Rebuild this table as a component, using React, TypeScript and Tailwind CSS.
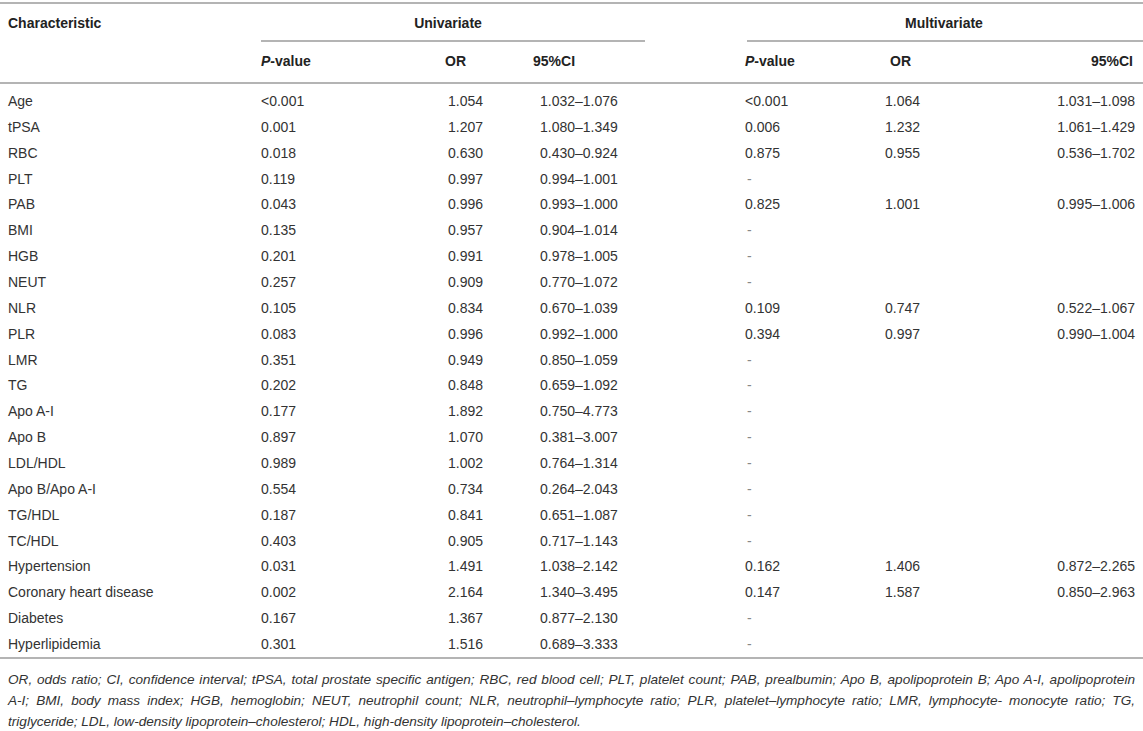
import React from "react";

type Row = [string, string, string, string, string?, string?, string?];

const rows: Row[] = [
  ["Age", "<0.001", "1.054", "1.032–1.076", "<0.001", "1.064", "1.031–1.098"],
  ["tPSA", "0.001", "1.207", "1.080–1.349", "0.006", "1.232", "1.061–1.429"],
  ["RBC", "0.018", "0.630", "0.430–0.924", "0.875", "0.955", "0.536–1.702"],
  ["PLT", "0.119", "0.997", "0.994–1.001", "-"],
  ["PAB", "0.043", "0.996", "0.993–1.000", "0.825", "1.001", "0.995–1.006"],
  ["BMI", "0.135", "0.957", "0.904–1.014", "-"],
  ["HGB", "0.201", "0.991", "0.978–1.005", "-"],
  ["NEUT", "0.257", "0.909", "0.770–1.072", "-"],
  ["NLR", "0.105", "0.834", "0.670–1.039", "0.109", "0.747", "0.522–1.067"],
  ["PLR", "0.083", "0.996", "0.992–1.000", "0.394", "0.997", "0.990–1.004"],
  ["LMR", "0.351", "0.949", "0.850–1.059", "-"],
  ["TG", "0.202", "0.848", "0.659–1.092", "-"],
  ["Apo A-I", "0.177", "1.892", "0.750–4.773", "-"],
  ["Apo B", "0.897", "1.070", "0.381–3.007", "-"],
  ["LDL/HDL", "0.989", "1.002", "0.764–1.314", "-"],
  ["Apo B/Apo A-I", "0.554", "0.734", "0.264–2.043", "-"],
  ["TG/HDL", "0.187", "0.841", "0.651–1.087", "-"],
  ["TC/HDL", "0.403", "0.905", "0.717–1.143", "-"],
  ["Hypertension", "0.031", "1.491", "1.038–2.142", "0.162", "1.406", "0.872–2.265"],
  ["Coronary heart disease", "0.002", "2.164", "1.340–3.495", "0.147", "1.587", "0.850–2.963"],
  ["Diabetes", "0.167", "1.367", "0.877–2.130", "-"],
  ["Hyperlipidemia", "0.301", "1.516", "0.689–3.333", "-"],
];

const cols = "grid grid-cols-[261px_179px_90px_215px_135px_160px_103px]";

export default function App() {
  return (
    <div
      className="w-[1143px] h-[731px] bg-white text-[#333] overflow-hidden"
      style={{ fontFamily: '"Liberation Sans", Arial, sans-serif' }}
    >
      <div className="pt-[2px]">
        <div className="h-[2px] bg-[#b4b4b4]" />
        {/* header row 1 */}
        <div className={`${cols} h-[36px] items-center text-[14px] font-bold text-[#222]`}>
          <div className="pl-[8px] pt-[2px]">Characteristic</div>
          <div className="col-span-3 flex justify-center pr-[110px] pt-[2px]">Univariate</div>
          <div className="col-span-3 flex justify-center pt-[2px]">Multivariate</div>
        </div>
        {/* sub lines */}
        <div className="flex h-[1.5px]">
          <div className="w-[261px]" />
          <div className="w-[384px] bg-[#b4b4b4]" />
          <div className="w-[102px]" />
          <div className="flex-1 bg-[#b4b4b4]" />
        </div>
        {/* header row 2 */}
        <div className={`${cols} h-[40px] items-center text-[14px] font-bold text-[#222]`}>
          <div />
          <div>
            <i>P</i>-value
          </div>
          <div className="pl-[5px]">OR</div>
          <div className="pl-[3px]">95%CI</div>
          <div>
            <i>P</i>-value
          </div>
          <div className="pl-[10px]">OR</div>
          <div className="text-right pr-[10px]">95%CI</div>
        </div>
        <div className="h-[2px] bg-[#b4b4b4]" />
        {/* data */}
        <div className="pt-[5px] text-[14px]">
          {rows.map((r, i) => (
            <div key={i} className={`${cols} h-[25.86px] items-center`}>
              <div className="pl-[8px]">{r[0]}</div>
              <div>{r[1]}</div>
              <div className="pl-[8px]">{r[2]}</div>
              <div className="pl-[10px]">{r[3]}</div>
              <div className={r[4] === "-" ? "pl-[2px] text-[#888]" : ""}>{r[4] ?? ""}</div>
              <div className="pl-[5px]">{r[5] ?? ""}</div>
              <div className="text-right pr-[8px] whitespace-nowrap">{r[6] ?? ""}</div>
            </div>
          ))}
        </div>
        <div className="h-[2px] bg-[#b4b4b4]" />
        {/* footnote */}
        <div className="px-[8px] pt-[10px] text-[13.6px] italic leading-[21px] text-[#333]">
          <div className="text-justify [text-align-last:justify] whitespace-nowrap">
            OR, odds ratio; CI, confidence interval; tPSA, total prostate specific antigen; RBC, red blood cell; PLT, platelet count; PAB, prealbumin; Apo B, apolipoprotein B; Apo A-I, apolipoprotein
          </div>
          <div className="text-justify [text-align-last:justify] whitespace-nowrap">
            A-I; BMI, body mass index; HGB, hemoglobin; NEUT, neutrophil count; NLR, neutrophil–lymphocyte ratio; PLR, platelet–lymphocyte ratio; LMR, lymphocyte- monocyte ratio; TG,
          </div>
          <div>
            triglyceride; LDL, low-density lipoprotein–cholesterol; HDL, high-density lipoprotein–cholesterol.
          </div>
        </div>
      </div>
    </div>
  );
}
